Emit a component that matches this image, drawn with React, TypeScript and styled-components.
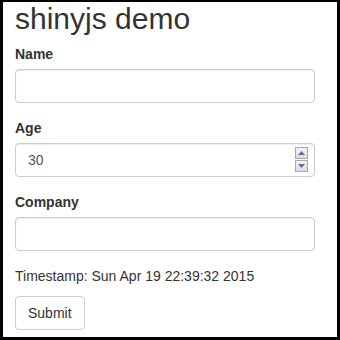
import React, { useState } from "react";
import styled, { createGlobalStyle } from "styled-components";

const GlobalStyle = createGlobalStyle`
  html, body {
    margin: 0;
    padding: 0;
    background: #000;
  }
  * {
    box-sizing: border-box;
  }
`;

const Frame = styled.div`
  width: 340px;
  height: 340px;
  border-style: solid;
  border-color: #000;
  border-width: 2px 3px 3px 3px;
  background: #fff;
  padding: 0 22px 0 12px;
  font-family: "Liberation Sans", Arial, sans-serif;
  font-size: 14px;
  line-height: 20px;
  color: #333;
  overflow: hidden;
`;

const Title = styled.h2`
  margin: 0 0 9px 0;
  font-size: 30px;
  font-weight: 500;
  line-height: 33px;
`;

const FormGroup = styled.div`
  margin-bottom: 15px;
`;

const Label = styled.label`
  display: block;
  font-weight: 700;
  margin-bottom: 5px;
`;

const Field = styled.div`
  position: relative;
`;

const Input = styled.input`
  display: block;
  width: 300px;
  height: 34px;
  padding: 6px 12px;
  font-family: inherit;
  font-size: 14px;
  line-height: 20px;
  color: #555;
  background: #fff;
  border: 1px solid #ccc;
  border-radius: 4px;
  box-shadow: inset 0 1px 1px rgba(0, 0, 0, 0.075);
  outline: none;
`;

const Spinner = styled.div`
  position: absolute;
  top: 4px;
  right: 7px;
  width: 13px;
  height: 25px;
  display: flex;
  flex-direction: column;
  gap: 1px;
`;

const SpinButton = styled.div`
  flex: 1;
  display: flex;
  align-items: center;
  justify-content: center;
  border: 1px solid #a9a9a9;
  background: linear-gradient(#f4f4f4, #dcdcdc);
`;

const Timestamp = styled.div`
  margin-bottom: 10px;
`;

const Button = styled.button`
  display: inline-block;
  height: 34px;
  padding: 6px 12px;
  font-family: inherit;
  font-size: 14px;
  line-height: 20px;
  color: #333;
  background: #fff;
  border: 1px solid #ccc;
  border-radius: 4px;
`;

const Arrow = ({ up }: { up?: boolean }) => (
  <svg width="7" height="4" viewBox="0 0 7 4">
    <path d={up ? "M0 4 L3.5 0 L7 4 Z" : "M0 0 L3.5 4 L7 0 Z"} fill="#5a6fa8" />
  </svg>
);

const App = () => {
  const [name, setName] = useState("");
  const [age, setAge] = useState("30");
  const [company, setCompany] = useState("");

  return (
    <>
      <GlobalStyle />
      <Frame>
        <Title>shinyjs demo</Title>
        <FormGroup>
          <Label>Name</Label>
          <Input value={name} onChange={(e) => setName(e.target.value)} />
        </FormGroup>
        <FormGroup>
          <Label>Age</Label>
          <Field>
            <Input value={age} onChange={(e) => setAge(e.target.value)} />
            <Spinner>
              <SpinButton>
                <Arrow up />
              </SpinButton>
              <SpinButton>
                <Arrow />
              </SpinButton>
            </Spinner>
          </Field>
        </FormGroup>
        <FormGroup>
          <Label>Company</Label>
          <Input value={company} onChange={(e) => setCompany(e.target.value)} />
        </FormGroup>
        <Timestamp>Timestamp: Sun Apr 19 22:39:32 2015</Timestamp>
        <Button>Submit</Button>
      </Frame>
    </>
  );
};

export default App;
